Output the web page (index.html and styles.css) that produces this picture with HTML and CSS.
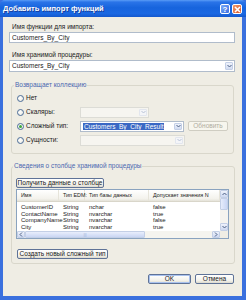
FILE: index.html
```html
<!DOCTYPE html>
<html lang="ru">
<head>
  <meta charset="UTF-8">
  <title>Добавить импорт функций</title>
  <link rel="stylesheet" href="styles.css">
</head>
<body>
  <div class="window">
    <div class="titlebar">
      <span class="title">Добавить импорт функций</span>
      <div class="caption-btns">
        <span class="cbtn help">?</span>
        <span class="cbtn close">
          <svg width="7" height="7" viewBox="0 0 7 7"><path d="M1 1 L6 6 M6 1 L1 6" stroke="#fff" stroke-width="1.6"/></svg>
        </span>
      </div>
    </div>
    <div class="client">
      <div class="field-label">Имя функции для импорта:</div>
      <div class="textbox">Customers_By_City</div>
      <div class="field-label second">Имя хранимой процедуры:</div>
      <div class="combo full">
        <span class="combo-text">Customers_By_City</span>
        <span class="combo-arrow"><svg width="5" height="4" viewBox="0 0 5 4"><path d="M0.5 1 L2.5 3 L4.5 1" fill="none" stroke="#4d6185" stroke-width="1"/></svg></span>
      </div>

      <fieldset class="group group-return">
        <legend>Возвращает коллекцию</legend>
        <div class="opt-row">
          <span class="opt"><span class="radio"></span>Нет</span>
        </div>
        <div class="opt-row">
          <span class="opt"><span class="radio"></span>Скаляры:</span>
          <div class="combo disabled w-scalar">
            <span class="combo-text"></span>
            <span class="combo-arrow"><svg width="5" height="4" viewBox="0 0 5 4"><path d="M0.5 1 L2.5 3 L4.5 1" fill="none" stroke="#b8c3d6" stroke-width="1"/></svg></span>
          </div>
        </div>
        <div class="opt-row">
          <span class="opt"><span class="radio checked"></span>Сложный тип:</span>
          <div class="combo w-complex">
            <span class="combo-text"><span class="selected-text">Customers_By_City_Result</span></span>
            <span class="combo-arrow"><svg width="5" height="4" viewBox="0 0 5 4"><path d="M0.5 1 L2.5 3 L4.5 1" fill="none" stroke="#4d6185" stroke-width="1"/></svg></span>
          </div>
          <span class="btn disabled btn-refresh">Обновить</span>
        </div>
        <div class="opt-row">
          <span class="opt"><span class="radio"></span>Сущности:</span>
          <div class="combo disabled w-entity">
            <span class="combo-text"></span>
            <span class="combo-arrow"><svg width="5" height="4" viewBox="0 0 5 4"><path d="M0.5 1 L2.5 3 L4.5 1" fill="none" stroke="#b8c3d6" stroke-width="1"/></svg></span>
          </div>
        </div>
      </fieldset>

      <fieldset class="group group-columns">
        <legend>Сведения о столбце хранимой процедуры</legend>
        <span class="btn btn-get">Получить данные о столбце</span>
        <div class="listview">
          <div class="lv-content">
            <div class="lv-header">
              <span>Имя</span><span>Тип EDM:</span><span>Тип базы данных</span><span>Допускает значения N</span>
            </div>
            <div class="lv-row"><span>CustomerID</span><span>String</span><span>nchar</span><span>false</span></div>
            <div class="lv-row"><span>ContactName</span><span>String</span><span>nvarchar</span><span>true</span></div>
            <div class="lv-row"><span>CompanyName</span><span>String</span><span>nvarchar</span><span>false</span></div>
            <div class="lv-row"><span>City</span><span>String</span><span>nvarchar</span><span>true</span></div>
          </div>
          <div class="vscroll">
            <span class="sb-btn"><svg width="5" height="4" viewBox="0 0 5 4"><path d="M0.5 3 L2.5 1 L4.5 3" fill="none" stroke="#4d6185" stroke-width="1"/></svg></span>
            <span class="sb-thumb v"></span>
            <span class="sb-track"></span>
            <span class="sb-btn"><svg width="5" height="4" viewBox="0 0 5 4"><path d="M0.5 1 L2.5 3 L4.5 1" fill="none" stroke="#4d6185" stroke-width="1"/></svg></span>
          </div>
          <div class="hscroll">
            <span class="sb-btn"><svg width="4" height="5" viewBox="0 0 4 5"><path d="M3 0.5 L1 2.5 L3 4.5" fill="none" stroke="#4d6185" stroke-width="1"/></svg></span>
            <span class="sb-thumb h"><span class="grip">|||</span></span>
            <span class="sb-track"></span>
            <span class="sb-btn"><svg width="4" height="5" viewBox="0 0 4 5"><path d="M1 0.5 L3 2.5 L1 4.5" fill="none" stroke="#4d6185" stroke-width="1"/></svg></span>
          </div>
          <div class="sb-corner"></div>
        </div>
        <span class="btn btn-create">Создать новый сложный тип</span>
      </fieldset>

      <div class="dialog-buttons">
        <span class="btn btn-ok default">OK</span>
        <span class="btn btn-cancel">Отмена</span>
      </div>
    </div>
  </div>
</body>
</html>
```

FILE: styles.css
```css
body {
  margin: 0;
  padding: 0;
  background: #fff;
  font-family: 'Liberation Sans', Arial, sans-serif;
}
.window {
  width: 246px;
  height: 300px;
  box-sizing: border-box;
  display: flex;
  flex-direction: column;
  background: #3a70de;
}
.titlebar {
  height: 17px;
  flex: none;
  display: flex;
  align-items: center;
  justify-content: space-between;
  padding: 0 4px 0 3px;
  background: linear-gradient(to bottom, #5a9cf6 0%, #2a74e8 12%, #1764dd 45%, #1a68e2 80%, #1458cc 100%);
  border-radius: 5px 5px 0 0;
}
.title {
  color: #fff;
  font-size: 7.5px;
  font-weight: bold;
  text-shadow: 1px 1px 0 #1a3d9a;
}
.caption-btns {
  display: flex;
  gap: 2px;
  margin-top: 1px;
}
.cbtn {
  width: 10px;
  height: 10px;
  box-sizing: border-box;
  border: 1px solid #fff;
  border-radius: 2px;
  display: flex;
  align-items: center;
  justify-content: center;
  color: #fff;
  font-size: 8px;
  font-weight: bold;
}
.cbtn.help {
  background: linear-gradient(135deg, #7aaaf8, #3a70e2);
}
.cbtn.close {
  background: linear-gradient(135deg, #f09a6a, #d6542a);
}
.client {
  flex: 1;
  margin: 0 4px 4px 3px;
  padding: 6px 7px 0 6px;
  background: #efede4;
  font-size: 6.5px;
  color: #1a1a1a;
}
.field-label {
  line-height: 8px;
  height: 8px;
  padding-left: 3px;
}
.field-label.second {
  margin-top: 8px;
}
.textbox {
  margin-top: 1px;
  height: 11px;
  box-sizing: border-box;
  border: 1px solid #b0bccb;
  background: #fff;
  line-height: 9px;
  padding-left: 2px;
}
.combo {
  height: 11px;
  box-sizing: border-box;
  border: 1px solid #b0bccb;
  background: #fff;
  display: flex;
  align-items: stretch;
}
.combo.full {
  margin-top: 1px;
  height: 12px;
}
.combo-text {
  flex: 1;
  line-height: 9px;
  padding-left: 2px;
  white-space: nowrap;
  overflow: hidden;
}
.combo.full .combo-text {
  line-height: 10px;
}
.combo-arrow {
  width: 8px;
  margin: 1px;
  box-sizing: border-box;
  border: 1px solid #c3cfe6;
  border-radius: 1px;
  background: linear-gradient(to bottom, #eef2fb, #d2dcf2);
  display: flex;
  align-items: center;
  justify-content: center;
}
.combo.disabled {
  border-color: #dcdcd6;
  background: #f6f5f0;
}
.combo.disabled .combo-arrow {
  border-color: #e2e6ee;
  background: #f4f5f8;
}
.selected-text {
  background: #3a68c4;
  color: #fff;
  padding: 0 1px;
}
.w-scalar { width: 69px; }
.w-complex { width: 104px; }
.w-entity { width: 105px; }

.group {
  margin: 9px 2px 0 2px;
  border: 1px solid #d9d7cb;
  border-radius: 3px;
  padding: 2px 5px 6px 5px;
}
.group legend {
  color: #4a67b0;
  line-height: 8px;
  padding: 0 1px;
  margin-left: -3px;
}
.opt-row {
  height: 14px;
  display: flex;
  align-items: center;
}
.opt {
  width: 63px;
  display: flex;
  align-items: center;
  gap: 2px;
  line-height: 8px;
}
.radio {
  width: 7px;
  height: 7px;
  box-sizing: border-box;
  border: 1px solid #4a6c98;
  border-radius: 50%;
  background: radial-gradient(circle at 40% 40%, #fff, #e6e4da);
  display: inline-flex;
  align-items: center;
  justify-content: center;
}
.radio.checked::after {
  content: '';
  width: 3px;
  height: 3px;
  border-radius: 50%;
  background: #3aa83a;
}
.btn {
  display: inline-flex;
  align-items: center;
  justify-content: center;
  box-sizing: border-box;
  height: 10px;
  border: 1px solid #5f7397;
  border-radius: 2px;
  background: linear-gradient(to bottom, #ffffff, #f2f1ea 70%, #dcd9cd);
  line-height: 8px;
  white-space: nowrap;
}
.btn.disabled {
  border-color: #cfcdc2;
  color: #b0ad9f;
  background: #f7f6ee;
}
.btn-refresh {
  width: 40px;
  margin-left: 4px;
}
.group-columns {
  margin-top: 8px;
  padding: 8px 5px 4px 4px;
}
.btn-get {
  width: 88px;
}
.listview {
  margin-top: 1px;
  width: 213px;
  height: 50px;
  box-sizing: border-box;
  border: 1px solid #8aa3bf;
  background: #fff;
  display: grid;
  grid-template-columns: 1fr 8px;
  grid-template-rows: 1fr 7px;
  overflow: hidden;
}
.lv-content {
  overflow: hidden;
  font-size: 6px;
}
.lv-header, .lv-row {
  display: grid;
  grid-template-columns: 42px 26px 64px 1fr;
  white-space: nowrap;
}
.lv-header {
  height: 11px;
  line-height: 11px;
  font-size: 5.4px;
  background: linear-gradient(to bottom, #fff, #f3f2ec 80%, #e4e2d8);
  border-bottom: 1px solid #d9d6ca;
  margin-bottom: 2px;
}
.lv-header span {
  border-right: 1px solid #e6e4da;
  padding-left: 4px;
}
.lv-row {
  height: 6.7px;
  line-height: 6.7px;
}
.lv-row span {
  padding-left: 4px;
}
.vscroll {
  display: flex;
  flex-direction: column;
  background: #f5f4ef;
}
.hscroll {
  display: flex;
  background: #f5f4ef;
}
.sb-btn {
  flex: none;
  width: 8px;
  height: 7px;
  box-sizing: border-box;
  border: 1px solid #c3cfe6;
  border-radius: 1px;
  background: linear-gradient(to bottom, #eef2fb, #cdd8f1);
  display: flex;
  align-items: center;
  justify-content: center;
}
.vscroll .sb-btn {
  height: 8px;
}
.sb-thumb {
  box-sizing: border-box;
  border: 1px solid #c3cfe6;
  border-radius: 1px;
  background: linear-gradient(to right, #e6ecfb, #c9d6f4);
}
.sb-thumb.v {
  height: 12px;
}
.sb-thumb.h {
  width: 120px;
  display: flex;
  align-items: center;
  justify-content: center;
  background: linear-gradient(to bottom, #e9eefb, #c9d6f4);
}
.grip {
  font-size: 4px;
  color: #9fb1d8;
}
.sb-track {
  flex: 1;
}
.sb-corner {
  background: #efede4;
}
.btn-create {
  margin-top: 10px;
  width: 91px;
  margin-left: 1px;
}
.dialog-buttons {
  margin-top: 10px;
  display: flex;
  justify-content: flex-end;
  gap: 4px;
  padding-right: 1px;
}
.btn-ok {
  width: 43px;
}
.btn-ok.default {
  box-shadow: inset 0 0 0 1px #a9c2ee;
}
.btn-cancel {
  width: 39px;
}
```
